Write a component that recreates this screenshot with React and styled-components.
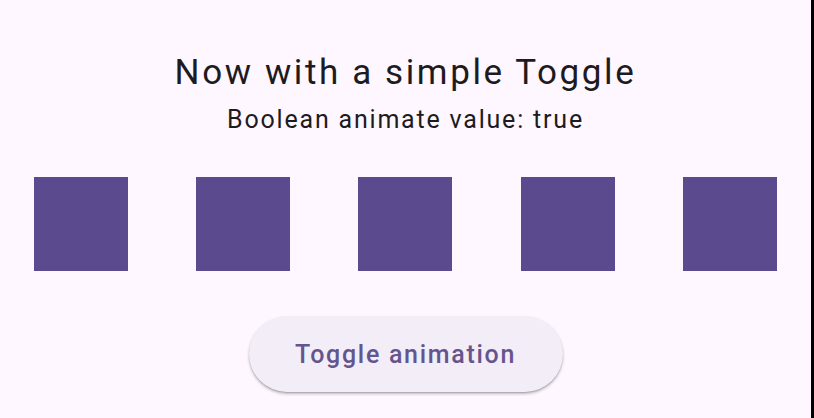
import React, { useState } from "react";
import styled, { createGlobalStyle } from "styled-components";

const GlobalStyle = createGlobalStyle`
  html, body {
    margin: 0;
    padding: 0;
    background: #000;
  }
  body {
    font-family: Roboto, "Noto Sans", sans-serif;
  }
`;

const Screen = styled.div`
  width: 811px;
  height: 418px;
  background: #fef7ff;
  display: flex;
  flex-direction: column;
  align-items: center;
  box-sizing: border-box;
  padding-top: 48px;
`;

const Title = styled.h1`
  margin: 0;
  font-size: 35px;
  font-weight: 400;
  line-height: 50px;
  letter-spacing: 2.6px;
  color: #1d1b20;
`;

const Subtitle = styled.p`
  margin: 6px 0 0;
  font-size: 25px;
  font-weight: 400;
  line-height: 32px;
  letter-spacing: 1.8px;
  color: #1d1b20;
`;

const Row = styled.div`
  width: 100%;
  display: flex;
  justify-content: space-around;
  margin-top: 41px;
`;

const Square = styled.div`
  width: 94px;
  height: 94px;
  background: #5b4a8e;
  opacity: ${(p) => (p.$on ? 1 : 0.4)};
`;

const ToggleButton = styled.button`
  margin-top: 45px;
  width: 314px;
  height: 76px;
  border: none;
  border-radius: 38px;
  background: #f3edf7;
  color: #65558f;
  font-family: Roboto, "Noto Sans", sans-serif;
  font-size: 25px;
  font-weight: 500;
  letter-spacing: 1.7px;
  box-shadow: 0 2px 3px rgba(0, 0, 0, 0.25), 0 1px 1px rgba(0, 0, 0, 0.12);
  cursor: pointer;
`;

export default function App() {
  const [animate, setAnimate] = useState(true);
  return (
    <>
      <GlobalStyle />
      <Screen>
        <Title>Now with a simple Toggle</Title>
        <Subtitle>Boolean animate value: {String(animate)}</Subtitle>
        <Row>
          {[0, 1, 2, 3, 4].map((i) => (
            <Square key={i} $on={animate} />
          ))}
        </Row>
        <ToggleButton onClick={() => setAnimate((a) => !a)}>
          Toggle animation
        </ToggleButton>
      </Screen>
    </>
  );
}
